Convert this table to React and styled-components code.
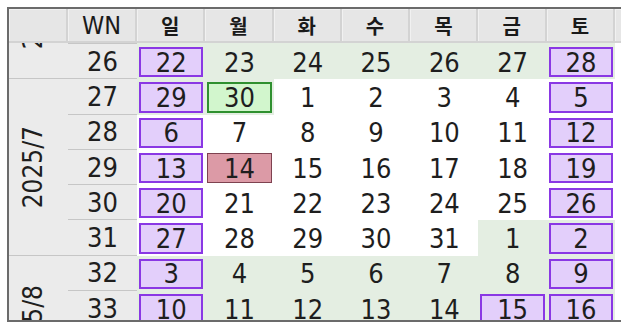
import React from "react";
import styled, { createGlobalStyle } from "styled-components";

const GlobalStyle = createGlobalStyle`
  html, body {
    margin: 0;
    padding: 0;
    background: #ffffff;
  }
  body {
    font-family: "DejaVu Sans Condensed", "Liberation Sans", sans-serif;
    color: #1e1e1e;
  }
`;

const DAY_NAMES = ["일", "월", "화", "수", "목", "금", "토"];
const FIRST_WEEK = 23;
const LAST_WEEK = 35;
const CURRENT_MONTH = 6; // July, zero based
const TODAY = "2025-5-30";
const MARKED = ["2025-6-14"];
const HOLIDAYS = ["2025-7-15"];

const COLUMNS = "59px 69px repeat(7, 68.3px)";
const ROW_HEIGHT = 35.3;

function key(d) {
  return `${d.getFullYear()}-${d.getMonth()}-${d.getDate()}`;
}

function buildWeeks() {
  const weeks = [];
  for (let wn = FIRST_WEEK; wn <= LAST_WEEK; wn++) {
    const start = new Date(2025, 5, 1 + (wn - FIRST_WEEK) * 7);
    const days = [];
    for (let i = 0; i < 7; i++) {
      days.push(new Date(start.getFullYear(), start.getMonth(), start.getDate() + i));
    }
    // a week belongs to the month of its thursday
    weeks.push({ wn, days, month: days[4].getMonth(), year: days[4].getFullYear() });
  }
  const groups = [];
  weeks.forEach(w => {
    const last = groups[groups.length - 1];
    if (last && last.month === w.month) last.weeks.push(w);
    else groups.push({ month: w.month, year: w.year, weeks: [w] });
  });
  return groups;
}

function dayKind(d) {
  const k = key(d);
  if (k === TODAY) return "today";
  if (MARKED.includes(k)) return "marked";
  if (d.getDay() === 0 || d.getDay() === 6 || HOLIDAYS.includes(k)) return "weekend";
  return "plain";
}

const BOXES = {
  weekend: { bg: "#e3cffb", border: "2px solid #8a38e4" },
  today: { bg: "#d2f6cd", border: "2px solid #2f902f" },
  marked: { bg: "#dc9aa6", border: "1px solid #7e4250" }
};

export default function App() {
  const groups = buildWeeks();

  return (
    <>
      <GlobalStyle />
      <Frame>
        <HeaderRow>
          <HeadCell />
          <HeadCell $latin>WN</HeadCell>
          {DAY_NAMES.map(n => (
            <HeadCell key={n}>{n}</HeadCell>
          ))}
          <HeadFiller />
        </HeaderRow>
        <Viewport>
          <Body>
            {groups.map(g => (
              <React.Fragment key={`${g.year}-${g.month}`}>
                {g.weeks.map((w, i) => (
                  <React.Fragment key={w.wn}>
                    {i === 0 && (
                      <MonthCell $span={g.weeks.length}>
                        <MonthLabel>
                          {g.year}/{g.month + 1}
                        </MonthLabel>
                      </MonthCell>
                    )}
                    <WeekCell>{w.wn}</WeekCell>
                    {w.days.map(d => {
                      const kind = dayKind(d);
                      return (
                        <DayCell key={key(d)} $other={d.getMonth() !== CURRENT_MONTH}>
                          <DayBox $kind={kind}>{d.getDate()}</DayBox>
                        </DayCell>
                      );
                    })}
                  </React.Fragment>
                ))}
              </React.Fragment>
            ))}
          </Body>
        </Viewport>
      </Frame>
    </>
  );
}

const Frame = styled.div`
  margin: 7px 0 0 7px;
  border: 2px solid #6b6b6b;
  border-right: none;
  height: 311px;
  overflow: hidden;
  background: #ffffff;
`;

const HeaderRow = styled.div`
  display: grid;
  grid-template-columns: ${COLUMNS} 1fr;
  height: 34px;
  background: #e4e4e4;
`;

const HeadCell = styled.div`
  display: flex;
  align-items: center;
  justify-content: center;
  background: #e6e6e6;
  border-right: 2px solid #d3d3d3;
  border-bottom: 2px solid #d3d3d3;
  box-shadow: inset 1px 1px 0 #f1f1f1;
  font-family: ${p =>
    p.$latin
      ? `"DejaVu Sans Condensed", "Liberation Sans", sans-serif`
      : `"Noto Sans CJK KR", "Noto Sans", sans-serif`};
  font-size: ${p => (p.$latin ? "25px" : "20px")};
  font-weight: ${p => (p.$latin ? 400 : 700)};
  color: #1a1a1a;
`;

const HeadFiller = styled.div`
  background: #e6e6e6;
  border-bottom: 2px solid #d3d3d3;
  box-shadow: inset 1px 1px 0 #f1f1f1;
`;

const Viewport = styled.div`
  height: 277px;
  overflow: hidden;
`;

const Body = styled.div`
  display: grid;
  grid-template-columns: ${COLUMNS};
  grid-auto-rows: ${ROW_HEIGHT}px;
  margin-top: ${-(ROW_HEIGHT * 3) + 1}px;
  font-size: 27px;
`;

const MonthCell = styled.div`
  grid-column: 1;
  grid-row: span ${p => p.$span};
  display: flex;
  align-items: center;
  justify-content: center;
  padding-right: 11px;
  background: #ebebeb;
  border-bottom: 1px solid #c6c6c6;
`;

const MonthLabel = styled.span`
  writing-mode: vertical-rl;
  transform: rotate(180deg);
  font-size: 26px;
  white-space: nowrap;
`;

const WeekCell = styled.div`
  grid-column: 2;
  display: flex;
  align-items: center;
  justify-content: center;
  background: #ebebeb;
  border-bottom: 1px solid #c6c6c6;
`;

const DayCell = styled.div`
  display: flex;
  padding: 3px 2px 2px;
  background: ${p => (p.$other ? "#e4eee2" : "#ffffff")};
`;

const DayBox = styled.div`
  flex: 1;
  display: flex;
  align-items: center;
  justify-content: center;
  box-sizing: border-box;
  background: ${p => (BOXES[p.$kind] ? BOXES[p.$kind].bg : "transparent")};
  border: ${p => (BOXES[p.$kind] ? BOXES[p.$kind].border : "none")};
`;
